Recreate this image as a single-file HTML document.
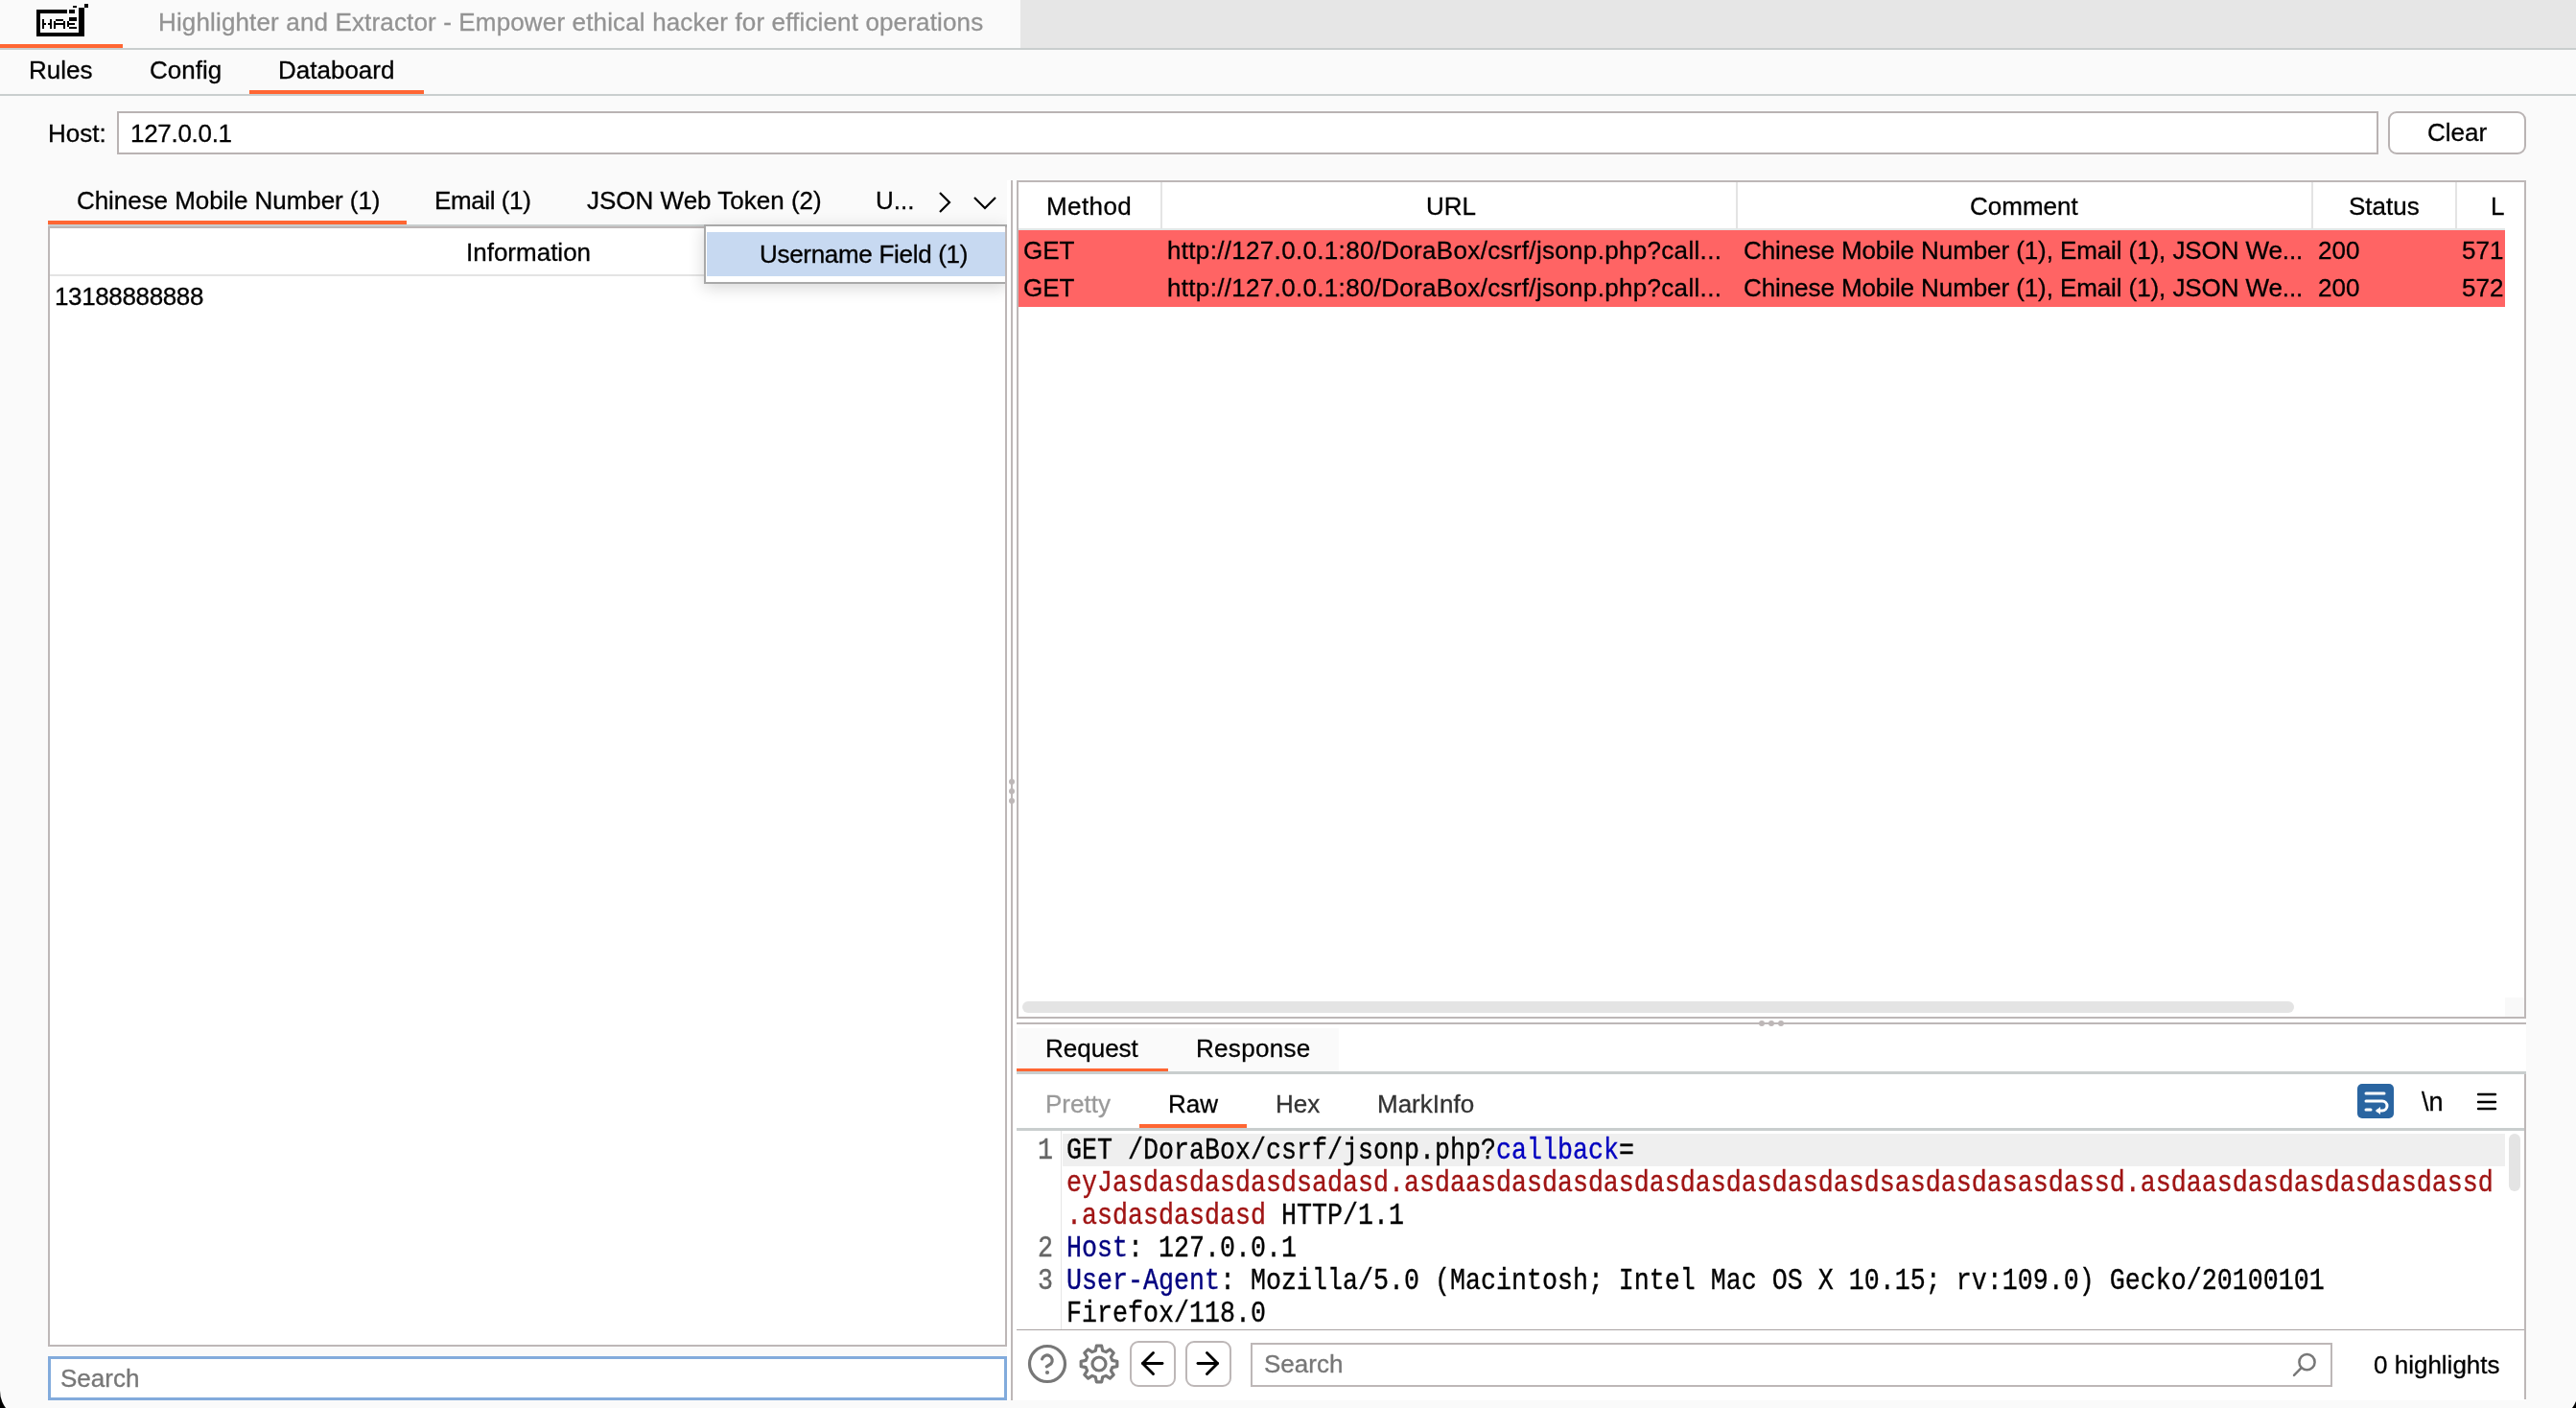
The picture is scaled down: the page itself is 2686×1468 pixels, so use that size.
<!DOCTYPE html>
<html><head><meta charset="utf-8">
<style>
html,body{margin:0;padding:0;}
body{width:2686px;height:1468px;position:relative;overflow:hidden;background:#000;font-family:"Liberation Sans",sans-serif;font-size:26px;color:#000;}
.win{position:absolute;left:0;top:0;width:2688px;height:1480px;background:#fafafa;border-radius:0 0 30px 30px;overflow:hidden;}
.a{position:absolute;}
.t{position:absolute;white-space:pre;line-height:29px;-webkit-text-stroke:0.3px currentColor;will-change:transform;}
.hl{position:absolute;height:2px;}
.vl{position:absolute;width:2px;}
.mono{font-family:"Liberation Mono",monospace;font-size:26.67px;will-change:transform;}
</style></head><body>
<div class="win">
<!-- ===== top title strip ===== -->
<div class="a" style="left:1064px;top:0;width:1622px;height:50px;background:#e6e6e6"></div>
<svg class="a" style="left:0;top:0" width="100" height="44" viewBox="0 0 100 44">
<g fill="#000">
<rect x="38" y="10" width="32" height="4"/>
<rect x="72" y="10" width="6" height="4"/>
<rect x="38" y="10" width="4" height="28"/>
<rect x="38" y="34" width="50" height="4"/>
<rect x="82" y="8" width="6" height="30"/>
<rect x="88" y="4" width="4" height="4"/>
<rect x="76" y="6" width="4" height="2"/>
<rect x="44" y="20" width="2" height="10"/>
<rect x="46" y="24" width="2" height="2"/>
<rect x="50" y="24" width="2" height="2"/>
<rect x="52" y="20" width="2" height="10"/>
<rect x="56" y="22" width="2" height="8"/>
<rect x="58" y="20" width="8" height="2"/>
<rect x="58" y="24" width="8" height="2"/>
<rect x="66" y="22" width="2" height="8"/>
<rect x="72" y="18" width="8" height="4"/>
<rect x="70" y="22" width="2" height="6"/>
<rect x="72" y="24" width="6" height="2"/>
<rect x="72" y="28" width="8" height="2"/>
</g></svg>
<div class="t" style="left:165px;top:9px;color:#939393;letter-spacing:0.147px">Highlighter and Extractor - Empower ethical hacker for efficient operations</div>
<div class="hl" style="left:0;top:46px;width:128px;height:4px;background:#ff6633"></div>
<div class="hl" style="left:0;top:50px;width:2686px;background:#c9cece"></div>

<!-- ===== second tab strip ===== -->
<div class="t" style="left:30px;top:59px">Rules</div>
<div class="t" style="left:156px;top:59px">Config</div>
<div class="t" style="left:290px;top:59px">Databoard</div>
<div class="hl" style="left:260px;top:94px;width:182px;height:4px;background:#ff6633"></div>
<div class="hl" style="left:0;top:98px;width:2686px;background:#c9cece"></div>

<!-- ===== host row ===== -->
<div class="t" style="left:50px;top:125px">Host:</div>
<div class="a" style="left:122px;top:116px;width:2354px;height:41px;background:#fff;border:2px solid #b9b3b3"></div>
<div class="t" style="left:136px;top:125px;letter-spacing:-0.3px">127.0.0.1</div>
<div class="a" style="left:2490px;top:116px;width:140px;height:41px;background:#fff;border:2px solid #b9b3b3;border-radius:9px"></div>
<div class="t" style="left:2531px;top:124px">Clear</div>

<!-- ===== left panel ===== -->
<div class="t" style="left:80px;top:195px;letter-spacing:-0.06px">Chinese Mobile Number (1)</div>
<div class="t" style="left:453px;top:195px;letter-spacing:-0.4px">Email (1)</div>
<div class="t" style="left:612px;top:195px">JSON Web Token (2)</div>
<div class="t" style="left:913px;top:195px">U...</div>
<svg class="a" style="left:975px;top:198px" width="20" height="26" viewBox="0 0 20 26"><path d="M5 3 L15 13 L5 23" fill="none" stroke="#000" stroke-width="2.2"/></svg>
<svg class="a" style="left:1012px;top:202px" width="30" height="20" viewBox="0 0 30 20"><path d="M4 4 L15 15 L26 4" fill="none" stroke="#000" stroke-width="2.2"/></svg>
<div class="hl" style="left:50px;top:230px;width:374px;height:4px;background:#ff6633"></div>
<div class="hl" style="left:50px;top:234px;width:1000px;height:2px;background:#c9cece"></div>
<!-- info table -->
<div class="a" style="left:50px;top:236px;background:#fff;border:2px solid #bdb7b7;box-sizing:border-box;width:1000px;height:1168px"></div>
<div class="t" style="left:486px;top:249px">Information</div>
<div class="hl" style="left:52px;top:286px;width:996px;background:#e4e4e4"></div>
<div class="t" style="left:57px;top:295px;letter-spacing:-0.37px">13188888888</div>
<!-- left search -->
<div class="a" style="left:50px;top:1414px;width:1000px;height:46px;box-sizing:border-box;background:#fff;border:3px solid #82abdc"></div>
<div class="t" style="left:63px;top:1423px;color:#777">Search</div>
<!-- popup -->
<div class="a" style="left:734px;top:234px;width:316px;height:62px;box-sizing:border-box;background:#fff;border:2px solid #a9a9a9;box-shadow:0 4px 16px rgba(0,0,0,0.16)"></div>
<div class="a" style="left:737px;top:242px;width:311px;height:46px;background:#c7d9f1"></div>
<div class="t" style="left:792px;top:251px;letter-spacing:-0.3px">Username Field (1)</div>

<!-- ===== splitter ===== -->
<div class="a" style="left:1050px;top:188px;width:1584px;height:1272px;background:#fff"></div>
<div class="vl" style="left:1048px;top:237px;height:1167px;background:#bdb7b7"></div>
<div class="vl" style="left:1054px;top:188px;height:1272px;background:#bdb7b7"></div>
<div class="a" style="left:1052px;top:812px;width:6px;height:6px;border-radius:50%;background:#bdb7b7"></div>
<div class="a" style="left:1052px;top:822px;width:6px;height:6px;border-radius:50%;background:#bdb7b7"></div>
<div class="a" style="left:1052px;top:832px;width:6px;height:6px;border-radius:50%;background:#bdb7b7"></div>

<!-- ===== right table ===== -->
<div class="a" style="left:1060px;top:188px;width:1574px;height:874px;box-sizing:border-box;border:2px solid #bdb7b7;background:#fff"></div>
<div class="hl" style="left:1062px;top:238px;width:1550px;background:#e3e6e6"></div>
<div class="vl" style="left:1210px;top:190px;height:48px;background:#e4e4e4"></div>
<div class="vl" style="left:1810px;top:190px;height:48px;background:#e4e4e4"></div>
<div class="vl" style="left:2410px;top:190px;height:48px;background:#e4e4e4"></div>
<div class="vl" style="left:2560px;top:190px;height:48px;background:#e4e4e4"></div>
<div class="t" style="left:1091px;top:201px;letter-spacing:0.4px">Method</div>
<div class="t" style="left:1487px;top:201px">URL</div>
<div class="t" style="left:2054px;top:201px">Comment</div>
<div class="t" style="left:2449px;top:201px">Status</div>
<div class="t" style="left:2597px;top:201px">L</div>
<div class="a" style="left:1062px;top:240px;width:1550px;height:80px;background:#ff6464"></div>
<div class="t" style="left:1067px;top:247px">GET</div>
<div class="t" style="left:1217px;top:247px;letter-spacing:0.32px">http://127.0.0.1:80/DoraBox/csrf/jsonp.php?call...</div>
<div class="t" style="left:1818px;top:247px;letter-spacing:-0.09px">Chinese Mobile Number (1), Email (1), JSON We...</div>
<div class="t" style="left:2417px;top:247px">200</div>
<div class="t" style="left:2567px;top:247px">571</div>
<div class="t" style="left:1067px;top:286px">GET</div>
<div class="t" style="left:1217px;top:286px;letter-spacing:0.32px">http://127.0.0.1:80/DoraBox/csrf/jsonp.php?call...</div>
<div class="t" style="left:1818px;top:286px;letter-spacing:-0.09px">Chinese Mobile Number (1), Email (1), JSON We...</div>
<div class="t" style="left:2417px;top:286px">200</div>
<div class="t" style="left:2567px;top:286px">572</div>
<div class="a" style="left:1066px;top:1044px;width:1326px;height:12px;border-radius:6px;background:#e4e4e4"></div>
<div class="a" style="left:2612px;top:1040px;width:20px;height:20px;background:#f9f9f9"></div>
<!-- divider -->
<div class="hl" style="left:1060px;top:1066px;width:1574px;background:#bdb7b7"></div>
<div class="a" style="left:1834px;top:1064px;width:6px;height:6px;border-radius:50%;background:#bdb7b7"></div>
<div class="a" style="left:1844px;top:1064px;width:6px;height:6px;border-radius:50%;background:#bdb7b7"></div>
<div class="a" style="left:1854px;top:1064px;width:6px;height:6px;border-radius:50%;background:#bdb7b7"></div>

<!-- ===== editor panel ===== -->
<div class="a" style="left:1060px;top:1072px;width:336px;height:45px;background:#fafafa"></div>
<div class="t" style="left:1090px;top:1079px">Request</div>
<div class="t" style="left:1247px;top:1079px;letter-spacing:0.3px">Response</div>
<div class="hl" style="left:1060px;top:1114px;width:158px;height:4px;background:#ff6633"></div>
<div class="hl" style="left:1060px;top:1117px;width:1574px;height:3px;background:#c9cece"></div>
<div class="vl" style="left:2632px;top:1120px;height:339px;background:#bdb7b7"></div>
<div class="t" style="left:1090px;top:1137px;color:#9a9a9a">Pretty</div>
<div class="t" style="left:1218px;top:1137px;color:#000">Raw</div>
<div class="t" style="left:1330px;top:1137px;color:#333">Hex</div>
<div class="t" style="left:1436px;top:1137px;color:#333">MarkInfo</div>
<div class="hl" style="left:1188px;top:1172px;width:112px;height:4px;background:#ff6633"></div>
<div class="hl" style="left:1060px;top:1176px;width:1572px;height:3px;background:#c9cece"></div>
<!-- wrap icon -->
<svg class="a" style="left:2458px;top:1130px" width="38" height="36" viewBox="0 0 38 36">
<rect x="0" y="0" width="38" height="36" rx="5" fill="#2a65a1"/>
<g stroke="#fff" stroke-width="3" stroke-linecap="round" fill="none">
<path d="M9 10 H28"/>
<path d="M9 18 H26 A5 5 0 0 1 26 28 H21"/>
<path d="M9 27 H14"/>
</g>
<path d="M24 24 L19 28 L24 32 Z" fill="#fff"/>
</svg>
<div class="t" style="left:2525px;top:1135px;font-size:27px">\n</div>
<svg class="a" style="left:2582px;top:1138px" width="22" height="22" viewBox="0 0 22 22">
<g stroke="#000" stroke-width="2.4" stroke-linecap="round"><path d="M2 3 H20"/><path d="M2 11 H20"/><path d="M2 18 H20"/></g></svg>

<!-- code -->
<div class="vl" style="left:1106px;top:1179px;width:1px;height:207px;background:#e6e6e6"></div>
<div class="a" style="left:1108px;top:1182px;width:1504px;height:34px;background:#efefef"></div>
<div class="a" style="left:2616px;top:1182px;width:12px;height:60px;border-radius:6px;background:#e4e4e4"></div>
<div class="a mono" style="left:1082px;top:1183px;line-height:28.9px;transform:scaleY(1.176);transform-origin:0 0;-webkit-text-stroke:0.3px #666;color:#666;white-space:pre">1<br><br><br>2<br>3</div>
<div class="a mono" style="left:1112px;top:1183px;line-height:28.9px;transform:scaleY(1.176);transform-origin:0 0;-webkit-text-stroke:0.3px;color:#000;white-space:pre">GET /DoraBox/csrf/jsonp.php?<span style="color:#0000c0">callback</span>=
<span style="color:#a01414">eyJasdasdasdasdsadasd.asdaasdasdasdasdasdasdasdasdasdsasdasdasasdassd.asdaasdasdasdasdasdassd</span>
<span style="color:#a01414">.asdasdasdasd</span> HTTP/1.1
<span style="color:#000080">Host</span>: 127.0.0.1
<span style="color:#000080">User-Agent</span>: Mozilla/5.0 (Macintosh; Intel Mac OS X 10.15; rv:109.0) Gecko/20100101
Firefox/118.0</div>
<div class="hl" style="left:1060px;top:1386px;width:1572px;height:1px;background:#a9a3a3"></div>

<!-- bottom toolbar -->
<svg class="a" style="left:1068px;top:1398px" width="48" height="48" viewBox="0 0 48 48">
<circle cx="24" cy="24" r="18.5" fill="none" stroke="#777" stroke-width="3.2"/>
<path d="M18.6 18.9 A5.4 5.4 0 1 1 27.9 23.9 L23.3 26.8" fill="none" stroke="#777" stroke-width="3.2" stroke-linecap="round" stroke-linejoin="round"/>
<circle cx="24" cy="33" r="2.1" fill="#777"/>
</svg>
<svg class="a" style="left:1122px;top:1398px" width="48" height="48" viewBox="0 0 48 48">
<path id="gear" fill="none" stroke="#777" stroke-width="3.2" stroke-linejoin="round" d="M20.34 10.18 L21.32 5.19 L26.68 5.19 L27.66 10.18 L31.18 11.63 L35.41 8.81 L39.19 12.59 L36.37 16.82 L37.82 20.34 L42.81 21.32 L42.81 26.68 L37.82 27.66 L36.37 31.18 L39.19 35.41 L35.41 39.19 L31.18 36.37 L27.66 37.82 L26.68 42.81 L21.32 42.81 L20.34 37.82 L16.82 36.37 L12.59 39.19 L8.81 35.41 L11.63 31.18 L10.18 27.66 L5.19 26.68 L5.19 21.32 L10.18 20.34 L11.63 16.82 L8.81 12.59 L12.59 8.81 L16.82 11.63 Z"/>
<circle cx="24" cy="24" r="7" fill="none" stroke="#777" stroke-width="3.2"/>
</svg>
<div class="a" style="left:1178px;top:1398px;width:48px;height:48px;box-sizing:border-box;border:2px solid #bdb7b7;border-radius:9px"></div>
<svg class="a" style="left:1178px;top:1398px" width="47" height="47" viewBox="0 0 47 47"><g fill="none" stroke="#000" stroke-width="2.9" stroke-linecap="round" stroke-linejoin="round"><path d="M34 23.5 H13.5"/><path d="M24.5 12.5 L13.5 23.5 L24.5 34.5"/></g></svg>
<div class="a" style="left:1236px;top:1398px;width:48px;height:48px;box-sizing:border-box;border:2px solid #bdb7b7;border-radius:9px"></div>
<svg class="a" style="left:1236px;top:1398px" width="47" height="47" viewBox="0 0 47 47"><g fill="none" stroke="#000" stroke-width="2.9" stroke-linecap="round" stroke-linejoin="round"><path d="M13 23.5 H33.5"/><path d="M22.5 12.5 L33.5 23.5 L22.5 34.5"/></g></svg>
<div class="a" style="left:1304px;top:1400px;width:1128px;height:46px;box-sizing:border-box;border:2px solid #bdb7b7;background:#fff"></div>
<div class="t" style="left:1318px;top:1408px;color:#777">Search</div>
<svg class="a" style="left:2386px;top:1408px" width="30" height="30" viewBox="0 0 30 30"><g fill="none" stroke="#777" stroke-width="2.5" stroke-linecap="round"><circle cx="19.5" cy="12.2" r="8.1"/><path d="M13.6 18.2 L6 25.8"/></g></svg>
<div class="t" style="left:2475px;top:1409px">0 highlights</div>

</div>
</body></html>
